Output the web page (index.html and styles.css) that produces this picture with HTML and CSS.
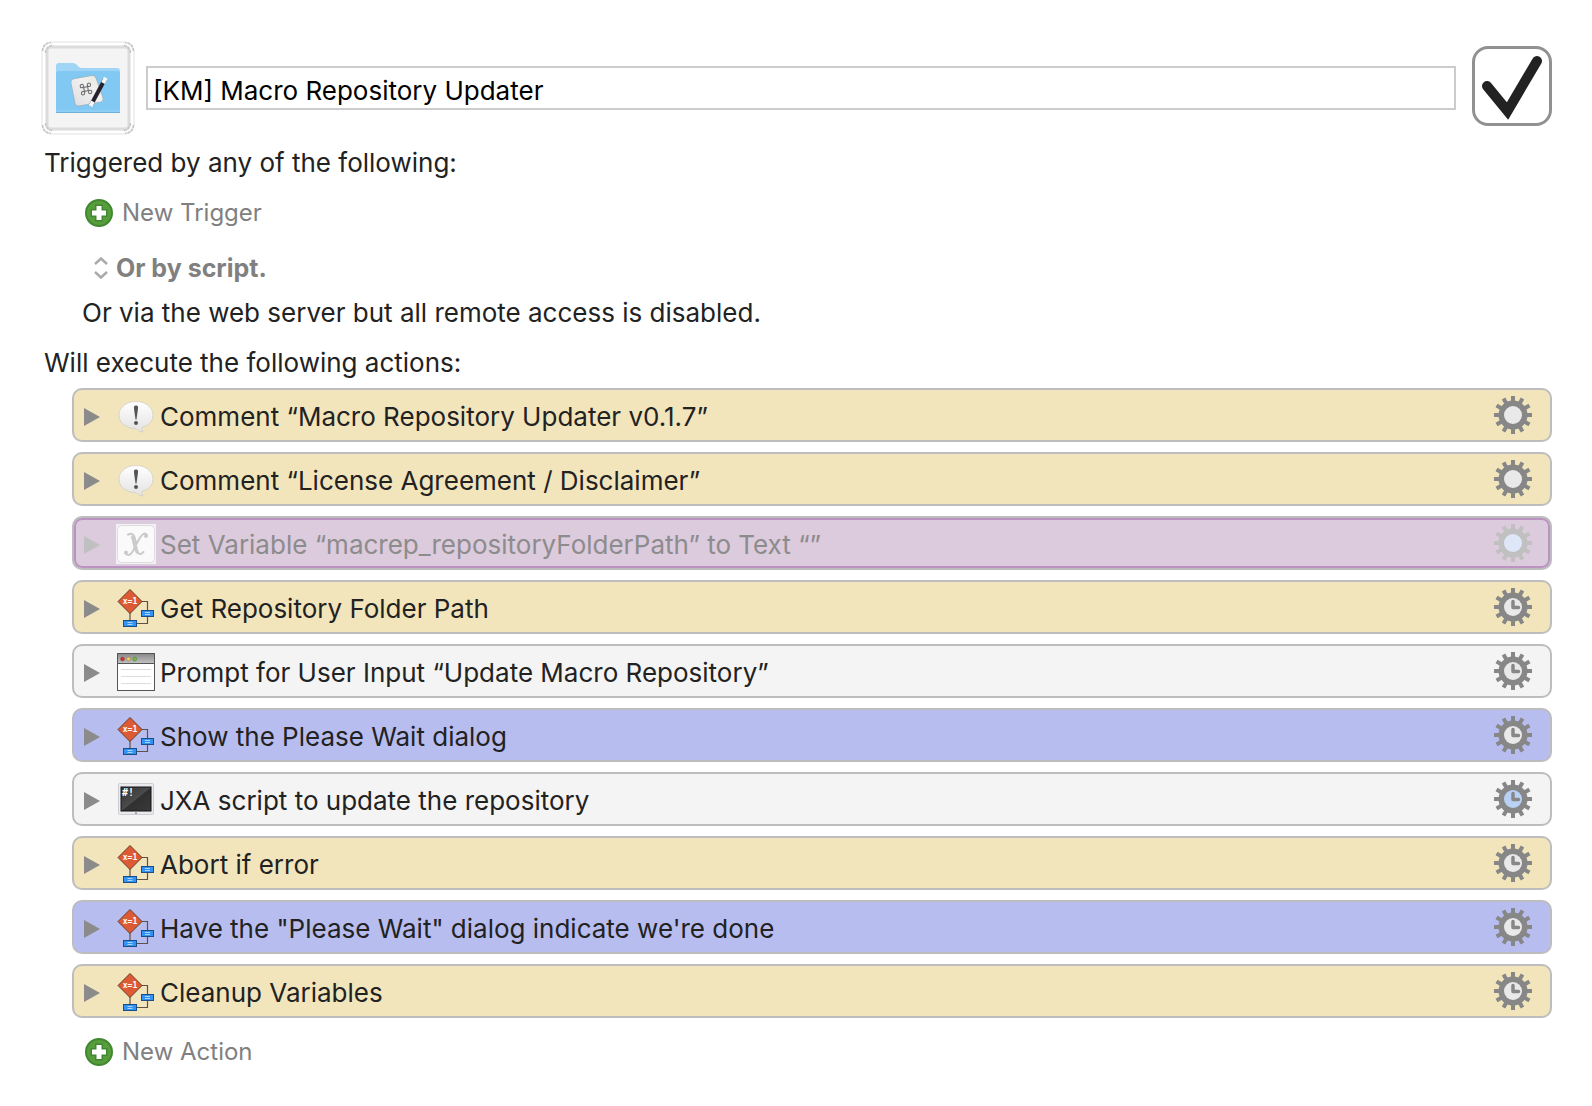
FILE: index.html
```html
<!DOCTYPE html>
<html lang="en">
<head>
<meta charset="utf-8">
<meta name="viewport" content="width=device-width, initial-scale=1">
<title>Macro Repository Updater</title>
<link rel="stylesheet" href="styles.css">
</head>
<body>
<svg class="sprite" aria-hidden="true">
  <defs>
    <linearGradient id="bubble-fill" x1="0" y1="0" x2="0" y2="1"><stop offset="0" stop-color="#fff"/><stop offset="1" stop-color="#e2e2e2"/></linearGradient>
    <linearGradient id="bar-fill" x1="0" y1="0" x2="0" y2="1"><stop offset="0" stop-color="#8a8a8a"/><stop offset="1" stop-color="#c0c0c0"/></linearGradient>
    <linearGradient id="screen-fill" x1="0" y1="0" x2="1" y2="1"><stop offset="0" stop-color="#333"/><stop offset=".5" stop-color="#4b4b4b"/><stop offset=".52" stop-color="#303030"/><stop offset="1" stop-color="#3a3a3a"/></linearGradient>
    <linearGradient id="paper-fill" x1="0" y1="1" x2="1" y2="0"><stop offset="0" stop-color="#dcdce0"/><stop offset=".6" stop-color="#f2f1f0"/><stop offset="1" stop-color="#e4e8d4"/></linearGradient>
  </defs>
  <symbol id="triangle" viewBox="0 0 16 20"><path d="M0 1L16 10L0 19Z" fill="currentColor"/></symbol>
  <symbol id="comment" viewBox="0 0 40 40">
    <path d="M20 5.500C10 5.500 3 11.500 3 19C3 27 10 32.500 20 32.500C22 35 24.500 36 27 36C26 34.500 25.700 33 26 31.500C33 29.500 37 25 37 19C37 11.500 30 5.500 20 5.500Z" fill="url(#bubble-fill)" stroke="#cfcac0" stroke-width=".7"/>
    <path d="M20 9.500C21.900 9.500 22.200 10.700 22 12.500L20.500 23.500H19.500L18 12.500C17.800 10.700 18.100 9.500 20 9.500Z" fill="#555"/><circle cx="20" cy="27" r="2" fill="#555"/>
  </symbol>
  <symbol id="variable" viewBox="0 0 40 40">
    <path d="M0 0H40V40H0Z" fill="#f4f0f5"/>
    <rect x="1.500" y="1.500" width="37" height="37" rx="4" fill="#fafafa" stroke="#dcdcdc"/>
    <path d="M12 10.500C18 8 19 13 20 20C21 29 23 32.500 27.500 28M31 11C29 8 25.500 10 22 17L17 27C14 32 11 32 9 29" fill="none" stroke="#cbcbcb" stroke-width="2" stroke-linecap="round"/>
    <path d="M16 12C18 15 18 26 22 29" fill="none" stroke="#cbcbcb" stroke-width="3"/>
    <circle cx="30" cy="12" r="2" fill="#cbcbcb"/><circle cx="10" cy="28.500" r="2" fill="#cbcbcb"/>
  </symbol>
  <symbol id="condition" viewBox="0 0 40 40">
    <path d="M14 22V33M24 13.500H31.500V35.500H21" fill="none" stroke="#5c5446" stroke-width="1.200"/>
    <path d="M14 1.500L26 13.500L14 25.500L2 13.500Z" fill="#dc5b35" stroke="#6b3a25"/>
    <rect x="25.500" y="22.500" width="12" height="6" fill="#3293f2" stroke="#1b4d86"/>
    <rect x="7.500" y="32.500" width="13" height="6" fill="#3293f2" stroke="#1b4d86"/>
    <path d="M29 24.500H34M29 26.500H34M11.500 34.500H16.500M11.500 36.500H16.500" stroke="#a9d3fa"/>
  </symbol>
  <symbol id="window" viewBox="0 0 40 40">
    <rect x="1.500" y="1.500" width="37" height="37" fill="#fff" stroke="#555"/>
    <path d="M2 2H38V11H2Z" fill="url(#bar-fill)"/><path d="M2 11.500H38" stroke="#555"/>
    <circle cx="6.500" cy="7" r="2" fill="#c6372f" stroke="#8a4a42" stroke-width=".6"/><circle cx="12.500" cy="7" r="2" fill="#f0cf70" stroke="#8f7d4c" stroke-width=".6"/><circle cx="18.700" cy="7" r="2" fill="#6fbf3c" stroke="#557f3c" stroke-width=".6"/>
    <path d="M5 17.500H35M5 24.500H35M5 31.500H35" stroke="#dedede"/>
  </symbol>
  <symbol id="terminal" viewBox="0 0 40 40">
    <rect x="2.500" y="3.500" width="35" height="31" rx="1" fill="#e9e9ee" stroke="#cdcdd4"/>
    <rect x="5" y="7" width="30" height="24" fill="url(#screen-fill)" stroke="#151515"/>
    <circle cx="20" cy="33.200" r=".9" fill="#888"/>
  </symbol>
  <symbol id="gear" viewBox="0 0 38 38">
    <g stroke="currentColor" stroke-width="4">
      <path d="M19 0V38M0 19H38"/>
      <path d="M19 0V38M0 19H38" transform="rotate(30 19 19)"/>
      <path d="M19 0V38M0 19H38" transform="rotate(60 19 19)"/>
    </g>
    <circle cx="19" cy="19" r="14.500" fill="currentColor"/>
    <circle cx="19" cy="19" r="9"/>
  </symbol>
  <symbol id="gear-clock" viewBox="0 0 38 38">
    <use href="#gear" width="38" height="38"/>
    <path d="M19 13.500V19.500H24.500" fill="none" stroke="currentColor" stroke-width="3.500" stroke-linecap="round" stroke-linejoin="round"/>
  </symbol>
  <symbol id="plus" viewBox="0 0 28 28">
    <circle cx="14" cy="14" r="13" fill="#579d3b" stroke="#408831" stroke-width="2"/>
    <path d="M14 5.500V22.500M5.500 14H22.500" stroke="#408831" stroke-width="8"/>
    <path d="M14 7V21M7 14H21" stroke="#fff" stroke-width="5"/>
  </symbol>
</svg>

<main class="editor">
  <header class="header">
    <button class="macro-icon" type="button" aria-label="Macro icon">
      <svg viewBox="0 0 94 94" width="94" height="94" aria-hidden="true">
        <rect x="1" y="1" width="92" height="92" rx="11" fill="#fff" stroke="#f0f0f0" stroke-width="2"/>
        <rect x="6" y="6" width="82" height="82" rx="4" fill="#f4f4f4" stroke="#dcdcdc" stroke-width="3"/>
        <g fill="none" stroke="#c4c4c4" stroke-width="1.500">
          <path id="corner" d="M1.500 10Q2 2 10 1.500M4.500 12Q5 5 12 4.500" stroke-dasharray="3 1"/>
          <use href="#corner" transform="translate(94 0) scale(-1 1)"/>
          <use href="#corner" transform="translate(0 94) scale(1 -1)"/>
          <use href="#corner" transform="translate(94 94) scale(-1 -1)"/>
        </g>
        <g transform="translate(15 22)">
          <path d="M0 3Q0 0 3 0H17Q19 0 20.500 1.500L23 4Q24 5 26 5H61Q64 5 64 8V20H0Z" fill="#a0d5f6"/>
          <path d="M0 11Q0 8 3 8H61Q64 8 64 11V49Q64 50 62 50H2Q0 50 0 49Z" fill="#81c8f3"/>
          <path d="M0 48H64" stroke="#9bd5f8"/><path d="M0 49.500H64" stroke="#6fb0d8"/>
          <path d="M17 16L36 12.500Q39 12 40 15L47 35Q47.500 38 45 39L23 43Q20 43.500 19 40.500L15 20Q14.500 17 17 16Z" fill="url(#paper-fill)" stroke="#90a5b3" stroke-width=".6"/>
          <g transform="translate(30 26) rotate(-10)" fill="none" stroke="#666" stroke-width="1"><path d="M-2 -2H2V2H-2Z"/><circle cx="-3.600" cy="-3.600" r="1.700"/><circle cx="3.600" cy="-3.600" r="1.700"/><circle cx="-3.600" cy="3.600" r="1.700"/><circle cx="3.600" cy="3.600" r="1.700"/></g>
          <path d="M35 42L49 16" stroke="#25222d" stroke-width="4"/>
          <path d="M34.500 43L37 38.500M47 20L49.800 14.800" stroke="#f7f7f7" stroke-width="4"/>
        </g>
      </svg>
    </button>
    <input class="macro-name" type="text" aria-label="Macro name" value="[KM] Macro Repository Updater">
    <label class="enabled">
      <input class="enabled-box" type="checkbox" aria-label="Macro enabled" checked>
      <svg class="enabled-mark" viewBox="0 0 80 80" aria-hidden="true"><path d="M15 40L35.500 65L65 15" fill="none" stroke="#222" stroke-width="10" stroke-linecap="round" stroke-linejoin="miter"/></svg>
    </label>
  </header>

  <section class="triggers">
    <h2 class="heading">Triggered by any of the following:</h2>
    <button class="add" type="button"><svg class="plus" aria-hidden="true"><use href="#plus"/></svg>New Trigger</button>
    <button class="script" type="button"><svg class="chevrons" viewBox="0 0 14 22" aria-hidden="true"><path d="M1 7L7 1.500L13 7M1 15L7 20.500L13 15" fill="none" stroke="#aaa" stroke-width="2.500"/></svg>Or by script.</button>
    <p class="remote">Or via the web server but all remote access is disabled.</p>
  </section>

  <section class="actions">
    <h2 class="heading">Will execute the following actions:</h2>
    <ul class="list">
      <li class="action sand"><button class="disclose" type="button" aria-label="Expand"><svg class="triangle" aria-hidden="true"><use href="#triangle"/></svg></button><svg class="kind" aria-hidden="true"><use href="#comment"/></svg><span class="title">Comment “Macro Repository Updater v0.1.7”</span><button class="gear" type="button" aria-label="Action menu"><svg class="gear-icon" aria-hidden="true"><use href="#gear"/></svg></button></li>
      <li class="action sand"><button class="disclose" type="button" aria-label="Expand"><svg class="triangle" aria-hidden="true"><use href="#triangle"/></svg></button><svg class="kind" aria-hidden="true"><use href="#comment"/></svg><span class="title">Comment “License Agreement / Disclaimer”</span><button class="gear" type="button" aria-label="Action menu"><svg class="gear-icon" aria-hidden="true"><use href="#gear"/></svg></button></li>
      <li class="action disabled"><button class="disclose" type="button" aria-label="Expand"><svg class="triangle" aria-hidden="true"><use href="#triangle"/></svg></button><svg class="kind" aria-hidden="true"><use href="#variable"/></svg><span class="title">Set Variable “macrep_repositoryFolderPath” to Text “”</span><button class="gear" type="button" aria-label="Action menu"><svg class="gear-icon" aria-hidden="true"><use href="#gear"/></svg></button></li>
      <li class="action sand"><button class="disclose" type="button" aria-label="Expand"><svg class="triangle" aria-hidden="true"><use href="#triangle"/></svg></button><svg class="kind" viewBox="0 0 40 40" aria-hidden="true"><use href="#condition"/><text class="glyph-text" x="14" y="16" text-anchor="middle">x=1</text></svg><span class="title">Get Repository Folder Path</span><button class="gear" type="button" aria-label="Action menu"><svg class="gear-icon" aria-hidden="true"><use href="#gear-clock"/></svg></button></li>
      <li class="action plain"><button class="disclose" type="button" aria-label="Expand"><svg class="triangle" aria-hidden="true"><use href="#triangle"/></svg></button><svg class="kind" aria-hidden="true"><use href="#window"/></svg><span class="title">Prompt for User Input “Update Macro Repository”</span><button class="gear" type="button" aria-label="Action menu"><svg class="gear-icon" aria-hidden="true"><use href="#gear-clock"/></svg></button></li>
      <li class="action violet"><button class="disclose" type="button" aria-label="Expand"><svg class="triangle" aria-hidden="true"><use href="#triangle"/></svg></button><svg class="kind" viewBox="0 0 40 40" aria-hidden="true"><use href="#condition"/><text class="glyph-text" x="14" y="16" text-anchor="middle">x=1</text></svg><span class="title">Show the Please Wait dialog</span><button class="gear" type="button" aria-label="Action menu"><svg class="gear-icon" aria-hidden="true"><use href="#gear-clock"/></svg></button></li>
      <li class="action plain"><button class="disclose" type="button" aria-label="Expand"><svg class="triangle" aria-hidden="true"><use href="#triangle"/></svg></button><svg class="kind" viewBox="0 0 40 40" aria-hidden="true"><use href="#terminal"/><text class="glyph-text shebang" x="6" y="16">#!</text></svg><span class="title">JXA script to update the repository</span><button class="gear custom" type="button" aria-label="Action menu"><svg class="gear-icon" aria-hidden="true"><use href="#gear-clock"/></svg></button></li>
      <li class="action sand"><button class="disclose" type="button" aria-label="Expand"><svg class="triangle" aria-hidden="true"><use href="#triangle"/></svg></button><svg class="kind" viewBox="0 0 40 40" aria-hidden="true"><use href="#condition"/><text class="glyph-text" x="14" y="16" text-anchor="middle">x=1</text></svg><span class="title">Abort if error</span><button class="gear" type="button" aria-label="Action menu"><svg class="gear-icon" aria-hidden="true"><use href="#gear-clock"/></svg></button></li>
      <li class="action violet"><button class="disclose" type="button" aria-label="Expand"><svg class="triangle" aria-hidden="true"><use href="#triangle"/></svg></button><svg class="kind" viewBox="0 0 40 40" aria-hidden="true"><use href="#condition"/><text class="glyph-text" x="14" y="16" text-anchor="middle">x=1</text></svg><span class="title">Have the "Please Wait" dialog indicate we're done</span><button class="gear" type="button" aria-label="Action menu"><svg class="gear-icon" aria-hidden="true"><use href="#gear-clock"/></svg></button></li>
      <li class="action sand"><button class="disclose" type="button" aria-label="Expand"><svg class="triangle" aria-hidden="true"><use href="#triangle"/></svg></button><svg class="kind" viewBox="0 0 40 40" aria-hidden="true"><use href="#condition"/><text class="glyph-text" x="14" y="16" text-anchor="middle">x=1</text></svg><span class="title">Cleanup Variables</span><button class="gear" type="button" aria-label="Action menu"><svg class="gear-icon" aria-hidden="true"><use href="#gear-clock"/></svg></button></li>
    </ul>
    <button class="add" type="button"><svg class="plus" aria-hidden="true"><use href="#plus"/></svg>New Action</button>
  </section>
</main>
</body>
</html>
```
FILE: styles.css
```css
* { box-sizing: border-box; }

body {
  margin: 0;
  background: #fff;
  color: #222;
  font: 26px/32px Inter, "Liberation Sans", sans-serif;
}

button {
  margin: 0;
  padding: 0;
  border: 0;
  background: none;
  color: inherit;
  font: inherit;
}

.sprite { position: absolute; width: 0; height: 0; }
svg { display: block; flex: none; }

.editor { padding: 41px 40px 40px; }

.header {
  display: flex;
  align-items: center;
  padding-left: 1px;
}

.macro-icon { margin-right: 11px; }

.macro-name {
  flex: 1;
  min-width: 0;
  height: 44px;
  padding: 4px 5px 0;
  border: 2px solid #ccc;
  background: #fff;
  color: #000;
  font: inherit;
}

.enabled {
  display: grid;
  margin: 0 0 4px 16px;
  height: 80px;
}

.enabled-box {
  grid-area: 1 / 1;
  appearance: none;
  width: 80px;
  height: 80px;
  margin: 0;
  border: 3px solid #919191;
  border-radius: 16px;
}

.enabled-mark {
  grid-area: 1 / 1;
  width: 80px;
  height: 80px;
  pointer-events: none;
}

.enabled-box:not(:checked) + .enabled-mark { visibility: hidden; }

.triggers, .actions {
  display: flex;
  flex-direction: column;
  align-items: flex-start;
}

.triggers { padding-top: 12px; }
.actions { padding-top: 18px; }

.heading {
  margin: 0;
  padding-left: 4px;
  font: inherit;
}

.add {
  display: flex;
  align-items: center;
  gap: 9px;
  margin: 18px 0 0 45px;
  color: #808080;
  font-size: 24px;
}

.plus { width: 28px; height: 28px; }

.script {
  display: flex;
  align-items: center;
  gap: 8px;
  margin: 23px 0 0 54px;
  color: #808080;
  font-size: 25px;
  font-weight: 700;
}

.chevrons { width: 14px; height: 22px; }

.remote { margin: 13px 0 0; padding-left: 42px; }

.list {
  display: flex;
  flex-direction: column;
  align-self: stretch;
  gap: 10px;
  margin: 9px 0 0;
  padding: 0 0 0 32px;
  list-style: none;
}

.action {
  display: flex;
  align-items: center;
  min-height: 54px;
  padding: 2px 18px 0 10px;
  border: 2px solid #bdbdbf;
  border-radius: 10px;
}

.sand { background: #f2e5bc; }
.plain { background: #f4f4f4; }
.violet { background: #b8bdf0; }

.disabled {
  background: #dccadd;
  box-shadow: inset 0 0 0 2px #bb92c0;
  color: #8c8c8c;
}

.disclose { padding-top: 1px; margin-right: 16px; color: #8b8b8b; }
.triangle { width: 16px; height: 20px; }
.kind { width: 40px; height: 40px; }
.title { flex: 1; min-width: 0; padding: 1px 0 0 4px; }

.gear { padding-bottom: 2px; color: #878787; }
.gear-icon { width: 38px; height: 38px; fill: #e9e9e9; }
.custom .gear-icon { fill: #b9d1f5; }
.disabled .disclose, .disabled .gear { color: #c0c0c0; }
.disabled .gear-icon { fill: #dde7f8; }

.glyph-text {
  fill: #fff;
  font: 700 8px "DejaVu Sans Mono", monospace;
}

.shebang { font-size: 10px; }
```
